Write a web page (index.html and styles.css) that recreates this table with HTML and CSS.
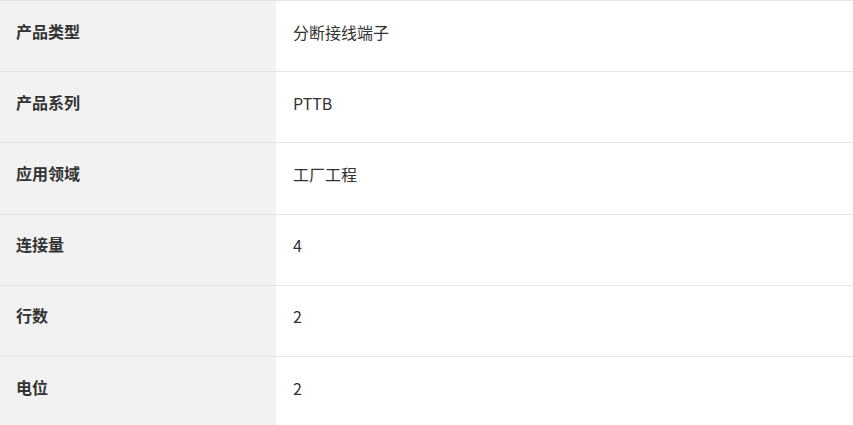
FILE: index.html
```html
<!DOCTYPE html>
<html lang="zh">
<head>
<meta charset="utf-8">
<link rel="stylesheet" href="styles.css">
</head>
<body>
<div class="spec">
  <div class="row"><div class="label">产品类型</div><div class="value">分断接线端子</div></div>
  <div class="row"><div class="label">产品系列</div><div class="value">PTTB</div></div>
  <div class="row"><div class="label">应用领域</div><div class="value">工厂工程</div></div>
  <div class="row"><div class="label">连接量</div><div class="value">4</div></div>
  <div class="row"><div class="label">行数</div><div class="value">2</div></div>
  <div class="row"><div class="label">电位</div><div class="value">2</div></div>
</div>
</body>
</html>
```
FILE: styles.css
```css
html, body {
  margin: 0;
  padding: 0;
  background: #fff;
}
body {
  font-family: "Liberation Sans", "Noto Sans CJK SC", sans-serif;
  font-size: 16px;
  color: #333;
  overflow: hidden;
}
.spec {
  display: flex;
  flex-direction: column;
}
.row {
  display: flex;
  height: 70.2px;
  border-top: 1px solid #e5e5e5;
}
.label {
  width: 276px;
  flex: none;
  background: #f2f2f2;
  font-weight: bold;
  padding: 0 0 11px 16px;
  box-sizing: border-box;
  display: flex;
  align-items: center;
}
.value {
  flex: 1;
  font-family: "Noto Sans CJK SC", sans-serif;
  line-height: 24px;
  padding: 0 0 9px 17px;
  display: flex;
  align-items: center;
}
```
